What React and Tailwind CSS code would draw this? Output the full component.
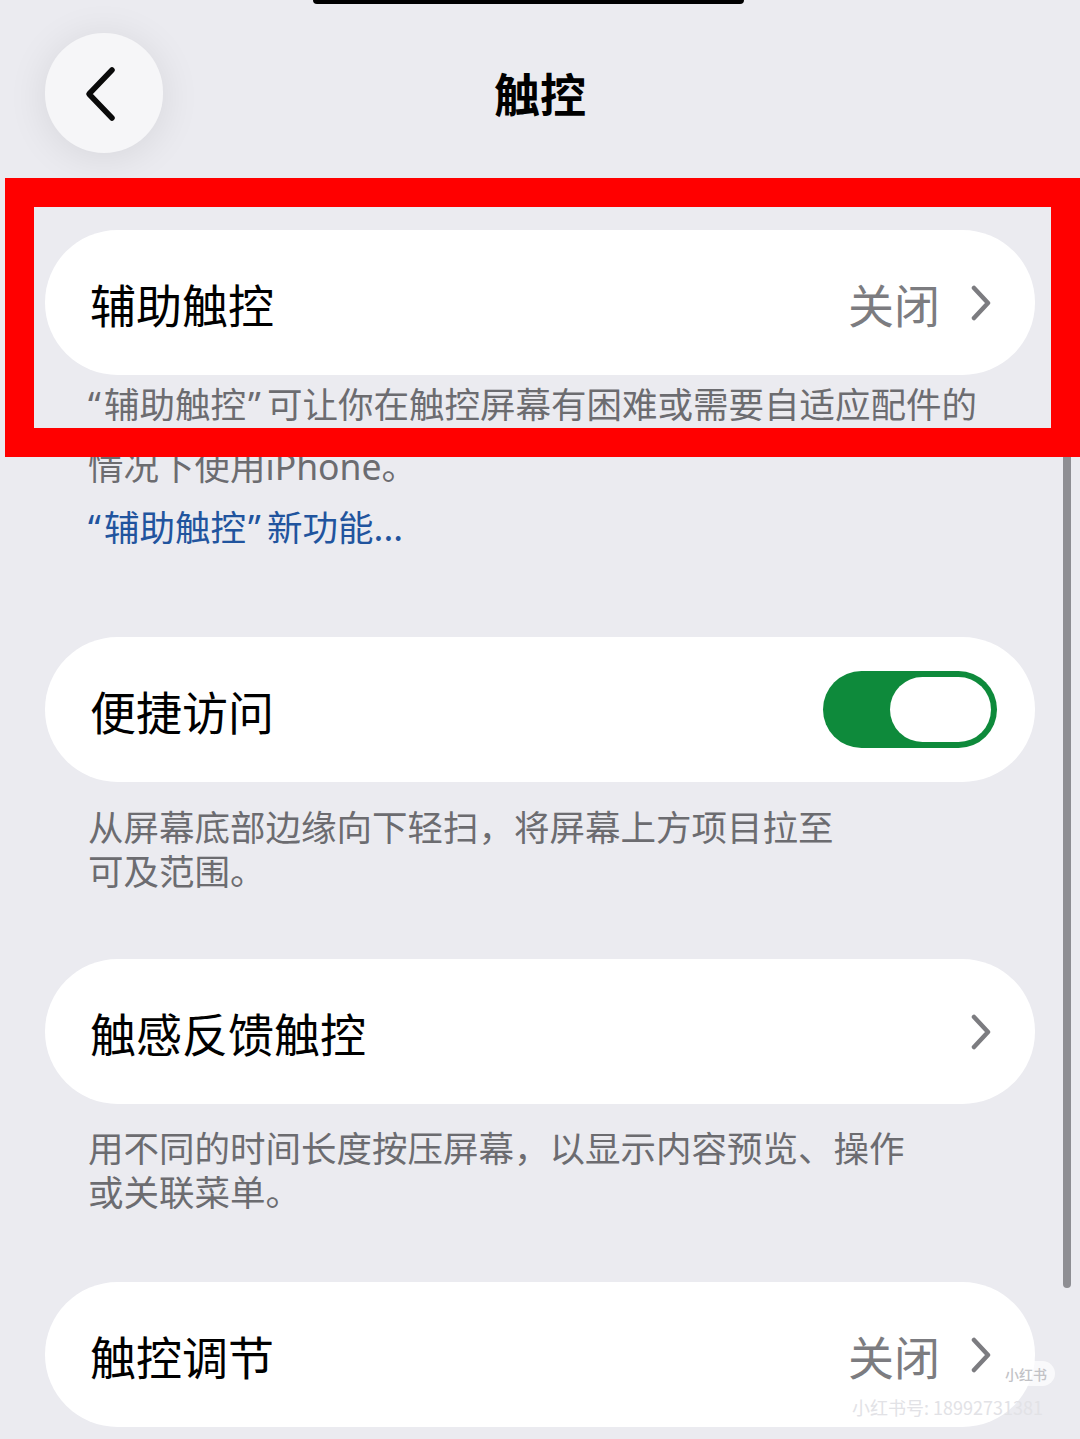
import React from "react";

function Chevron() {
  return (
    <svg width="22" height="36" viewBox="0 0 22 36" fill="none">
      <path
        d="M4 3l14 15L4 33"
        stroke="#7c7c80"
        strokeWidth="4.5"
        strokeLinecap="round"
        strokeLinejoin="round"
      />
    </svg>
  );
}

function Toggle() {
  return (
    <div className="flex h-[77px] w-[174px] items-center justify-end rounded-full bg-[#0e8a3b] p-[6px]">
      <div className="h-[65px] w-[101px] rounded-full bg-white" />
    </div>
  );
}

function Row({ title, value, chevron, toggle }) {
  return (
    <div
      className={
        "mx-[45px] flex h-[145px] items-center rounded-full bg-white pl-[45px] " +
        (toggle ? "pr-[38px]" : "pr-[43px]")
      }
    >
      <span className="text-[46px] leading-none text-black">{title}</span>
      <div className="ml-auto flex items-center gap-[30px]">
        {value && (
          <span className="text-[46px] leading-none text-[#7c7c80]">{value}</span>
        )}
        {chevron && <Chevron />}
        {toggle && <Toggle />}
      </div>
    </div>
  );
}

// proportional quotes, as iOS sets them
function Quoted({ children }) {
  return (
    <>
      <span className="inline-block w-[16px] font-['Noto_Sans',sans-serif] leading-none">“</span>
      {children}
      <span className="inline-block w-[21px] pl-[2px] font-['Noto_Sans',sans-serif] leading-none">”</span>
    </>
  );
}

export default function App() {
  return (
    <div className="relative h-[1439px] w-[1080px] overflow-hidden bg-[#ebebf0] font-['Noto_Sans_CJK_SC','Noto_Sans',sans-serif]">
      {/* status bar pill */}
      <div className="ml-[313px] h-[4px] w-[431px] rounded-b-full bg-black" />

      {/* header */}
      <div className="mt-[29px] grid h-[120px] grid-cols-[1fr_auto_1fr] items-center">
        <div className="pl-[45px]">
          <button className="h-[120px] w-[118px] rounded-full bg-[#f6f6f8] shadow-[0_4px_40px_rgba(0,0,0,0.09)]">
            <svg width="118" height="120" viewBox="0 0 118 120" fill="none">
              <path
                d="M67 37L44 61l23 24"
                stroke="#0a0a0a"
                strokeWidth="5.5"
                strokeLinecap="round"
                strokeLinejoin="round"
              />
            </svg>
          </button>
        </div>
        <h1 className="-mt-[8px] text-[46px] font-semibold leading-none text-black">触控</h1>
        <div />
      </div>

      {/* 辅助触控 */}
      <div className="mt-[77px]">
        <Row title="辅助触控" value="关闭" chevron />
      </div>
      <div className="pl-[88px] text-[35.5px] leading-[45px] text-[#6c6c70]">
        <div className="mt-[5px] h-[45px] whitespace-nowrap">
          <Quoted>辅助触控</Quoted>可让你在触控屏幕有困难或需要自适应配件的
        </div>
        <div className="mt-[17px] h-[45px] whitespace-nowrap">
          情况下使用<span className="font-['Noto_Sans',sans-serif] leading-none">iPhone</span>。
        </div>
        <div className="mt-[16px] h-[45px] whitespace-nowrap text-[#21549e]">
          <Quoted>辅助触控</Quoted>新功能...
        </div>
      </div>

      {/* 便捷访问 */}
      <div className="mt-[89px]">
        <Row title="便捷访问" toggle />
      </div>
      <p className="mt-[22px] whitespace-pre-line pl-[88px] text-[35.5px] leading-[44px] text-[#6c6c70]">
        {"从屏幕底部边缘向下轻扫，将屏幕上方项目拉至\n可及范围。"}
      </p>

      {/* 触感反馈触控 */}
      <div className="mt-[67px]">
        <Row title="触感反馈触控" chevron />
      </div>
      <p className="mt-[21px] whitespace-pre-line pl-[88px] text-[35.5px] leading-[44px] text-[#6c6c70]">
        {"用不同的时间长度按压屏幕，以显示内容预览、操作\n或关联菜单。"}
      </p>

      {/* 触控调节 */}
      <div className="mt-[69px]">
        <Row title="触控调节" value="关闭" chevron />
      </div>

      {/* scroll indicator */}
      <div className="absolute left-[1063px] top-[445px] h-[843px] w-[8px] rounded-full bg-[#8e8e93]" />

      {/* annotation frame */}
      <div className="absolute left-[5px] top-[178px] h-[279px] w-[1075px] border-[29px] border-[#ff0000]" />

      {/* watermark */}
      <div className="absolute left-[997px] top-[1361px] flex h-[25px] items-center rounded-full bg-white/70 px-[8px] text-[14px] font-medium leading-none text-[#c2c2c6]">
        小红书
      </div>
      <div className="absolute left-[852px] top-[1396px] whitespace-nowrap text-[18px] leading-[22px] text-[#e2e2e6]">
        小红书号: 18992731381
      </div>
    </div>
  );
}
